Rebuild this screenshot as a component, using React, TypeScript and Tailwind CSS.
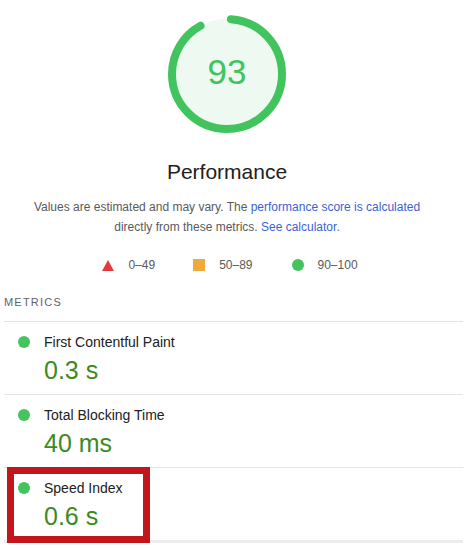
import React from "react";

const metrics = [
  { label: "First Contentful Paint", value: "0.3 s" },
  { label: "Total Blocking Time", value: "40 ms" },
  { label: "Speed Index", value: "0.6 s" },
];

function Gauge({ score }: { score: number }) {
  const r = 55;
  const c = 2 * Math.PI * r;
  return (
    <div className="relative h-[120px] w-[120px]">
      <svg width="120" height="120" viewBox="0 0 120 120" className="-rotate-90">
        <circle cx="60" cy="60" r={r} fill="#eefaf1" stroke="none" />
        <circle
          cx="60"
          cy="60"
          r={r}
          fill="none"
          stroke="#41c45d"
          strokeWidth="8"
          strokeLinecap="round"
          strokeDasharray={`${(score / 100) * c - 8} ${c}`}
          strokeDashoffset={-4}
        />
      </svg>
      <div className="absolute inset-0 flex items-center justify-center pb-[6px] text-[35px] leading-none text-[#41c45d]">
        {score}
      </div>
    </div>
  );
}

export default function App() {
  return (
    <div className="relative h-[550px] w-[468px] overflow-hidden bg-white font-['Liberation_Sans',Arial,sans-serif]">
      <div className="flex w-[454px] flex-col items-center pt-[14px]">
        <Gauge score={93} />
        <h1 className="mt-[26px] text-[21px] leading-[24px] text-[#212121]">Performance</h1>
        <p className="mt-[13px] text-center text-[12px] leading-[20px] text-[#5a5a5a]">
          Values are estimated and may vary. The{" "}
          <span className="text-[#3c5fd4]">performance score is calculated</span>
          <br />
          directly from these metrics.{" "}
          <span className="text-[#3c5fd4]">See calculator.</span>
        </p>
        <div className="mt-[18px] flex h-[20px] items-center pl-[6px] text-[12px] text-[#5a5a5a]">
          <svg width="12" height="11" viewBox="0 0 12 11">
            <polygon points="6,0 12,11 0,11" fill="#e33b3b" />
          </svg>
          <span className="ml-[14px]">0–49</span>
          <span className="ml-[38px] h-[12px] w-[12px] bg-[#f2a93b]" />
          <span className="ml-[14px]">50–89</span>
          <span className="ml-[39px] h-[12px] w-[12px] rounded-full bg-[#45c35e]" />
          <span className="ml-[14px]">90–100</span>
        </div>
      </div>

      <div className="mt-[19px] pl-[4px] pr-[5px]">
        <div className="h-[16px] text-[11px] leading-[16px] tracking-[0.11em] text-[#5f6368]">
          METRICS
        </div>
        <div className="mt-[11px]">
          {metrics.map((m) => (
            <div key={m.label} className="border-t border-[#e4e4e4] pb-[9px] pl-[14px] pt-[10px]">
              <div className="flex h-[20px] items-center">
                <span className="h-[12px] w-[12px] rounded-full bg-[#45c35e]" />
                <span className="ml-[14px] text-[14px] text-[#212121]">{m.label}</span>
              </div>
              <div className="mt-[3px] pl-[26px] text-[25px] leading-[30px] text-[#3d8a20]">
                {m.value}
              </div>
            </div>
          ))}
          <div className="h-[3px] bg-[#ececec]" />
        </div>
      </div>

      <div className="absolute left-[7px] top-[467px] h-[76px] w-[143px] border-[7px] border-[#c3161c]" />
    </div>
  );
}
